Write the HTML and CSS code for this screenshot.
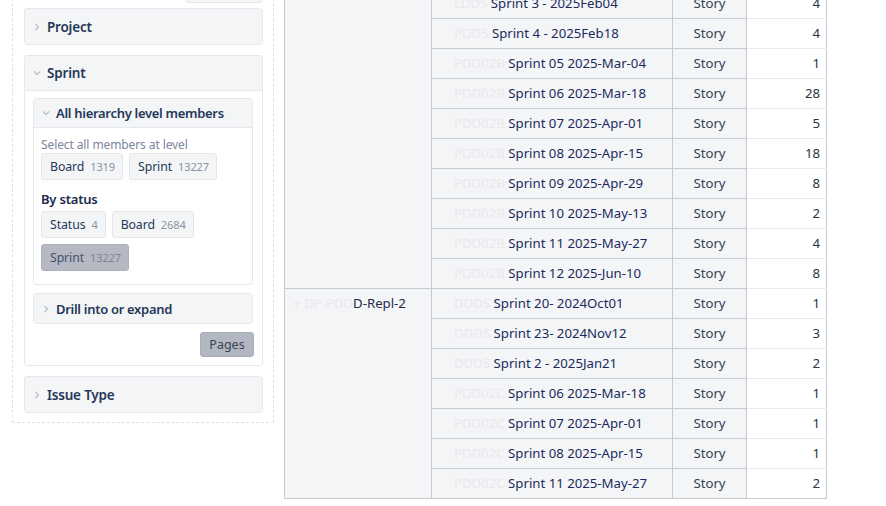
FILE: index.html
```html
<!DOCTYPE html>
<html lang="en">
<head>
<meta charset="utf-8">
<title>Report</title>
<link rel="stylesheet" href="styles.css">
</head>
<body>
<div class="page">
  <aside class="sidebar">
    <div class="top-actions"><button class="ghost-btn">Clear</button></div>

    <section class="panel">
      <header class="panel-head">
        <svg class="chev" viewBox="0 0 8 8"><path d="M2.5 1 L5.5 4 L2.5 7"/></svg>
        <span>Project</span>
      </header>
    </section>

    <section class="panel">
      <header class="panel-head open">
        <svg class="chev" viewBox="0 0 8 8"><path d="M1 2.5 L4 5.5 L7 2.5"/></svg>
        <span>Sprint</span>
      </header>
      <div class="panel-body">
        <section class="sub">
          <header class="sub-head open">
            <svg class="chev" viewBox="0 0 8 8"><path d="M1 2.5 L4 5.5 L7 2.5"/></svg>
            <span>All hierarchy level members</span>
          </header>
          <div class="sub-body">
            <div class="hint">Select all members at level</div>
            <div class="chips">
              <span class="chip">Board<em>1319</em></span>
              <span class="chip">Sprint<em>13227</em></span>
            </div>
            <div class="group-label">By status</div>
            <div class="chips">
              <span class="chip">Status<em>4</em></span>
              <span class="chip">Board<em>2684</em></span>
              <span class="chip active">Sprint<em>13227</em></span>
            </div>
          </div>
        </section>
        <section class="sub">
          <header class="sub-head">
            <svg class="chev" viewBox="0 0 8 8"><path d="M2.5 1 L5.5 4 L2.5 7"/></svg>
            <span>Drill into or expand</span>
          </header>
        </section>
        <div class="actions"><button class="pages-btn">Pages</button></div>
      </div>
    </section>

    <section class="panel">
      <header class="panel-head">
        <svg class="chev" viewBox="0 0 8 8"><path d="M2.5 1 L5.5 4 L2.5 7"/></svg>
        <span>Issue Type</span>
      </header>
    </section>
  </aside>

  <div class="report">
    <table class="grid">
      <colgroup>
        <col class="c-epic"><col class="c-sprint"><col class="c-type"><col class="c-val">
      </colgroup>
      <tbody>
        <tr><td class="epic" rowspan="10"></td><td class="sprint"><span class="mask">LDDS </span>Sprint 3 - 2025Feb04</td><td class="type">Story</td><td class="val">4</td></tr>
        <tr><td class="sprint"><span class="mask">PDDS </span>Sprint 4 - 2025Feb18</td><td class="type">Story</td><td class="val">4</td></tr>
        <tr><td class="sprint"><span class="mask">PDD02B </span>Sprint 05 2025-Mar-04</td><td class="type">Story</td><td class="val">1</td></tr>
        <tr><td class="sprint"><span class="mask">PDD02B </span>Sprint 06 2025-Mar-18</td><td class="type">Story</td><td class="val">28</td></tr>
        <tr><td class="sprint"><span class="mask">PDD02B </span>Sprint 07 2025-Apr-01</td><td class="type">Story</td><td class="val">5</td></tr>
        <tr><td class="sprint"><span class="mask">PDD02B </span>Sprint 08 2025-Apr-15</td><td class="type">Story</td><td class="val">18</td></tr>
        <tr><td class="sprint"><span class="mask">PDD02B </span>Sprint 09 2025-Apr-29</td><td class="type">Story</td><td class="val">8</td></tr>
        <tr><td class="sprint"><span class="mask">PDD02B </span>Sprint 10 2025-May-13</td><td class="type">Story</td><td class="val">2</td></tr>
        <tr><td class="sprint"><span class="mask">PDD02B </span>Sprint 11 2025-May-27</td><td class="type">Story</td><td class="val">4</td></tr>
        <tr><td class="sprint"><span class="mask">PDD02B </span>Sprint 12 2025-Jun-10</td><td class="type">Story</td><td class="val">8</td></tr>
        <tr><td class="epic" rowspan="7"><span class="mask">+ DP-PDD</span>D-Repl-2</td><td class="sprint"><span class="mask">DDDS </span>Sprint 20- 2024Oct01</td><td class="type">Story</td><td class="val">1</td></tr>
        <tr><td class="sprint"><span class="mask">DDDS </span>Sprint 23- 2024Nov12</td><td class="type">Story</td><td class="val">3</td></tr>
        <tr><td class="sprint"><span class="mask">DDDS </span>Sprint 2 - 2025Jan21</td><td class="type">Story</td><td class="val">2</td></tr>
        <tr><td class="sprint"><span class="mask">PDD02C </span>Sprint 06 2025-Mar-18</td><td class="type">Story</td><td class="val">1</td></tr>
        <tr><td class="sprint"><span class="mask">PDD02C </span>Sprint 07 2025-Apr-01</td><td class="type">Story</td><td class="val">1</td></tr>
        <tr><td class="sprint"><span class="mask">PDD02C </span>Sprint 08 2025-Apr-15</td><td class="type">Story</td><td class="val">1</td></tr>
        <tr><td class="sprint"><span class="mask">PDD02C </span>Sprint 11 2025-May-27</td><td class="type">Story</td><td class="val">2</td></tr>
      </tbody>
    </table>
  </div>
</div>
</body>
</html>
```

FILE: styles.css
```css
* { box-sizing: border-box; }

html, body {
  margin: 0;
  background: #ffffff;
  font-family: "Segoe UI", "Noto Sans", "Open Sans", sans-serif;
  color: #172b4d;
  overflow: hidden;
}

.page {
  display: flex;
  align-items: flex-start;
  gap: 10px;
  padding-left: 12px;
  height: 506px;
}

/* ---------- filter sidebar ---------- */
.sidebar {
  width: 262px;
  flex: none;
  margin-top: -22px;
  padding: 0 10px 9px 11px;
  border: 1px dashed #dfe1e6;
  border-top: none;
  display: flex;
  flex-direction: column;
  gap: 10px;
}

.top-actions {
  display: flex;
  justify-content: flex-end;
  margin-bottom: -5px;
}

.ghost-btn {
  width: 78px;
  height: 25px;
  border: 1px solid #e4e6ea;
  border-radius: 3px;
  background: #f4f5f7;
  color: #42526e;
  font: inherit;
  font-size: 13px;
}

.panel {
  border: 1px solid #e6e8eb;
  border-radius: 3px;
  background: #ffffff;
}

.panel-head {
  height: 35px;
  display: flex;
  align-items: center;
  gap: 6px;
  padding-left: 8px;
  background: #f4f5f7;
  font-size: 13.5px;
  letter-spacing: -0.2px;
  font-weight: 600;
  color: #253858;
}

.panel-head.open { border-bottom: 1px solid #e6e8eb; }

.chev {
  width: 8px;
  height: 8px;
  flex: none;
  fill: none;
  stroke: #b3b9c4;
  stroke-width: 1.1;
}

.panel-body {
  padding: 7px 9px 8px 8px;
  display: flex;
  flex-direction: column;
  gap: 8px;
}

.sub {
  border: 1px solid #e6e8eb;
  border-radius: 3px;
}

.sub-head {
  height: 29px;
  display: flex;
  align-items: center;
  gap: 6px;
  padding-left: 8px;
  background: #f4f5f7;
  font-size: 13px;
  letter-spacing: -0.3px;
  font-weight: 600;
  color: #253858;
}

.sub-head.open { border-bottom: 1px solid #e6e8eb; }

.sub-body {
  padding: 8px 8px 13px 7px;
}

.hint {
  font-size: 12px;
  letter-spacing: -0.1px;
  color: #7a869a;
  line-height: 17px;
}

.chips {
  display: flex;
  flex-wrap: wrap;
  gap: 6px;
}

.chip {
  height: 27px;
  display: inline-flex;
  align-items: center;
  padding: 0 7px 0 8px;
  border: 1px solid #e4e6ea;
  border-radius: 3px;
  background: #f4f5f7;
  font-size: 12.3px;
  letter-spacing: -0.1px;
  color: #253858;
}

.chip em {
  font-style: normal;
  font-size: 11px;
  color: #8993a4;
  margin-left: 6px;
}

.chip.active {
  background: #b6b9c3;
  border-color: #aeb2bc;
  color: #42526e;
}

.chip.active em { color: #7d8494; }

.group-label {
  margin: 10px 0 2px;
  font-size: 13px;
  letter-spacing: -0.2px;
  font-weight: 600;
  color: #172b4d;
  line-height: 19px;
}

.actions {
  display: flex;
  justify-content: flex-end;
  margin-right: -1px;
}

.pages-btn {
  width: 54px;
  height: 25px;
  border: 1px solid #a8adb8;
  border-radius: 3px;
  background: #b3b7c2;
  color: #3b4356;
  font: inherit;
  font-size: 12.5px;
  padding: 0;
}

/* ---------- report table ---------- */
.report {
  flex: none;
  width: 542px;
  margin-top: -12px;
}

.grid {
  width: 542px;
  border-collapse: collapse;
  table-layout: fixed;
  font-size: 13.2px;
}

.c-epic { width: 147px; }
.c-sprint { width: 241px; }
.c-type { width: 74px; }
.c-val { width: 80px; }

.grid td {
  height: 30px;
  padding: 0 6px;
  white-space: nowrap;
  overflow: hidden;
  border: 1px solid #c7cad3;
  background: #f4f5f7;
  line-height: 29px;
}

.grid td.epic {
  vertical-align: top;
  padding-left: 8px;
  color: #1d2a4a;
}

.grid td.sprint {
  padding-left: 22px;
  color: #1b2a5c;
}

.grid td.type {
  text-align: center;
  color: #344055;
}

.grid td.val {
  text-align: right;
  background: #ffffff;
  color: #2e3440;
  border-top-color: #e9ebef;
  border-bottom-color: #e9ebef;
}

.grid tr:last-child td.val { border-bottom-color: #c7cad3; }

.mask {
  color: #e8e9ed;
}
```
